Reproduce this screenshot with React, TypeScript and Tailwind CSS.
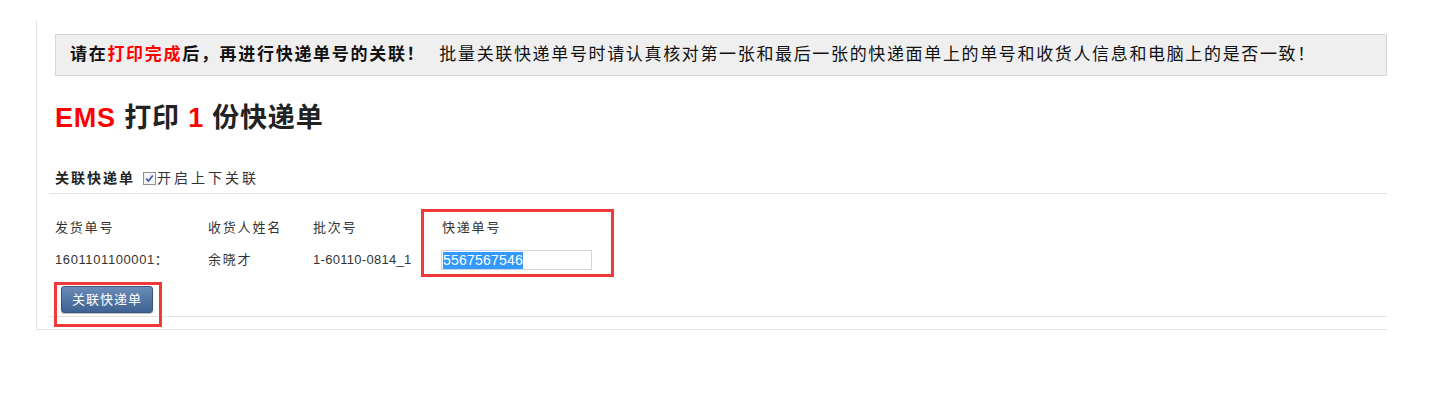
function Checkbox() {
  return (
    <span className="inline-flex w-[13px] h-[13px] border border-[#8f8f8f] bg-[#f4f4f4] items-center justify-center mr-[1px]">
      <svg width="11" height="11" viewBox="0 0 11 11">
        <path d="M2.2 5.6 L4.4 8 L8.8 2.4" fill="none" stroke="#3b5ba8" strokeWidth="1.6" />
      </svg>
    </span>
  );
}

export default function App() {
  const font = { fontFamily: '"Liberation Sans", "Noto Sans CJK SC", sans-serif' };
  return (
    <div className="relative w-[1429px] h-[395px] pt-[20px] bg-white text-[#333]" style={font}>
      <div className="ml-[36px] w-[1351px] border-l border-b border-[#e4e4e4] pl-[18px] pt-[14px] pb-[12px]">
        {/* notice bar */}
        <div className="h-[42px] flex items-center pl-[14px] bg-[#efefef] border border-[#d6d6d6] text-[17px] text-[#111]">
          <span className="font-bold tracking-[1.7px]">
            请在<span className="text-[#ff0000]">打印完成</span>后，再进行快递单号的关联！
          </span>
          <span className="ml-[14px] tracking-[1.65px]">
            批量关联快递单号时请认真核对第一张和最后一张的快递面单上的单号和收货人信息和电脑上的是否一致！
          </span>
        </div>

        {/* title */}
        <h1 className="mt-[22px] h-[40px] leading-[40px] text-[27px] font-bold text-[#222] tracking-[0.8px]">
          <span className="text-[#ff0000]">EMS</span> 打印 <span className="text-[#ff0000]">1</span> 份快递单
        </h1>

        {/* section header */}
        <div className="mt-[30px] h-[20px] flex items-center text-[14px] tracking-[2px]">
          <span className="font-bold text-[#222]">关联快递单</span>
          <span className="ml-[8px] inline-flex items-center">
            <Checkbox />
            <span className="text-[#333] tracking-[3px]">开启上下关联</span>
          </span>
        </div>

        <div className="-ml-[6px] mt-[5px] border-t border-[#e2e2e2]" />

        {/* table */}
        <div className="mt-[24px] flex h-[20px] items-center text-[13px] tracking-[1.8px] text-[#333]">
          <div className="w-[153px]">发货单号</div>
          <div className="w-[105px]">收货人姓名</div>
          <div className="w-[129px]">批次号</div>
          <div>快递单号</div>
        </div>
        <div className="mt-[12px] flex h-[20px] items-center text-[13px] text-[#333]">
          <div className="w-[153px] tracking-[0.6px]">1601101100001：</div>
          <div className="w-[105px] tracking-[1.8px]">余晓才</div>
          <div className="w-[128px] tracking-[0.3px]">1-60110-0814_1</div>
          <div className="w-[151px] h-[20px] border border-[#cfd3da] flex items-center pl-[1px]">
            <span className="bg-[#3399ff] text-white text-[14px] leading-[17px] tracking-[0.2px]">5567567546</span>
          </div>
        </div>

        <div className="mt-[16px] pl-[6px]">
          <button className="w-[92px] h-[27px] rounded-[3px] border border-[#36547e] bg-gradient-to-b from-[#6b8cb8] to-[#3f6292] text-white text-[13px] tracking-[1px] shadow-[0_1px_1px_rgba(0,0,0,0.25)]">
            关联快递单
          </button>
        </div>

        <div className="-ml-[6px] mt-[3px] border-t border-[#e2e2e2]" />
      </div>

      {/* annotation boxes */}
      <div className="absolute left-[421px] top-[209px] w-[193px] h-[68px] border-[3px] border-[#f03a3a]" />
      <div className="absolute left-[54px] top-[282px] w-[108px] h-[45px] border-[3px] border-[#f03a3a]" />
    </div>
  );
}
